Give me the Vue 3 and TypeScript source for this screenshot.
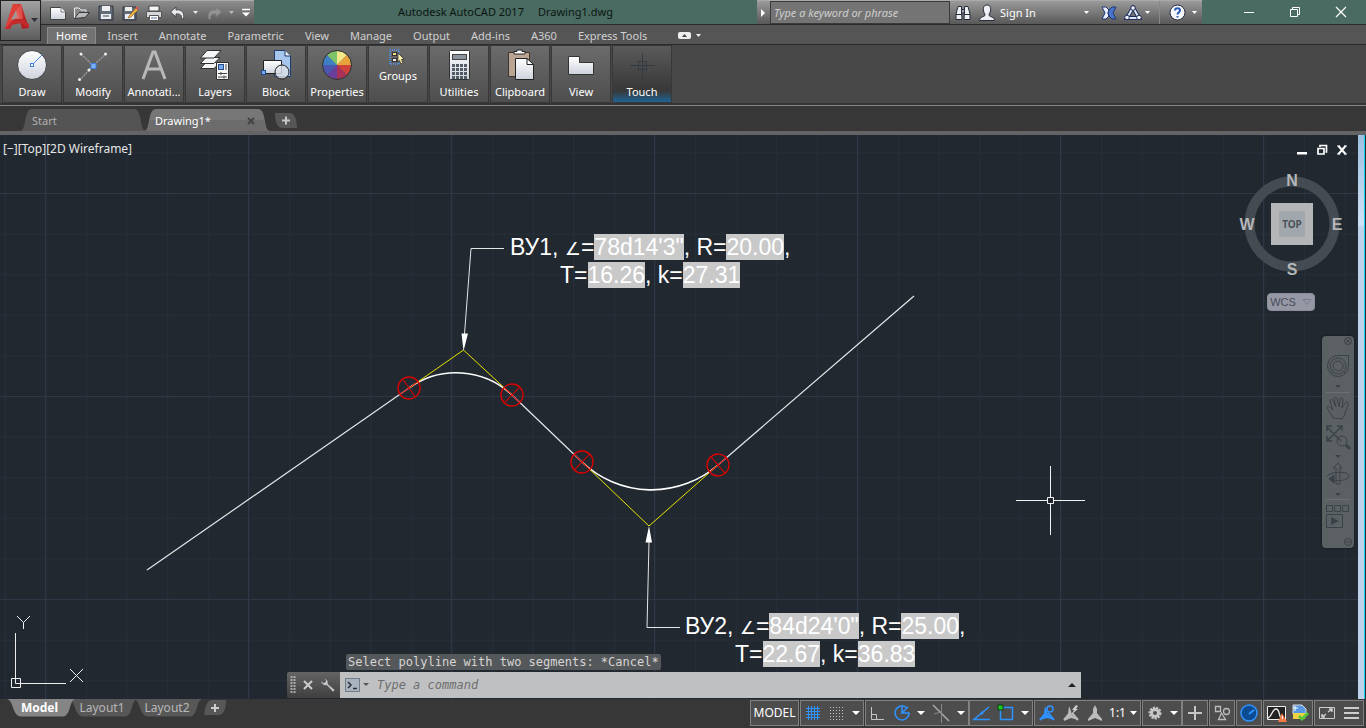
<script setup lang="ts">
import { ref } from 'vue'

const menus = ['Home', 'Insert', 'Annotate', 'Parametric', 'View', 'Manage', 'Output', 'Add-ins', 'A360', 'Express Tools']
const activeMenu = ref('Home')
const keyword = ref('')
const command = ref('')
const layouts = ['Model', 'Layout1', 'Layout2']
const activeLayout = ref('Model')

const wheelColours = ['#f3e58a', '#e8a33c', '#d0413a', '#a8325a', '#6a3f9c', '#4a58b0', '#3f7fc4', '#7cc36a']
const wheel = wheelColours.map((fill, i) => {
  const n = wheelColours.length
  const a = (i / n) * Math.PI * 2 - Math.PI / 2
  const b = ((i + 1) / n) * Math.PI * 2 - Math.PI / 2
  const p = (t: number) => `${(16 + 14 * Math.cos(t)).toFixed(2)} ${(16 + 14 * Math.sin(t)).toFixed(2)}`
  return { fill, d: `M16 16L${p(a)}A14 14 0 0 1 ${p(b)}Z` }
})

const markers = [
  { x: 409, y: 253, turn: -35 },
  { x: 512, y: 260, turn: 44 },
  { x: 582, y: 327, turn: 44 },
  { x: 718, y: 330, turn: -41 },
]
</script>

<template>
  <div class="app">
    <svg class="defs" width="0" height="0" aria-hidden="true">
      <defs>
        <linearGradient id="paper" x1="0" y1="0" x2="0" y2="1"><stop offset="0" stop-color="#fff" /><stop offset="1" stop-color="#cdd2dc" /></linearGradient>
        <linearGradient id="logoRed" x1="0" y1="0" x2="1" y2="1"><stop offset="0" stop-color="#e8443c" /><stop offset="1" stop-color="#a51a20" /></linearGradient>
        <pattern id="minor" x="45.4" y="17.4" width="40.6" height="40.6" patternUnits="userSpaceOnUse"><path d="M.5 0V40.6M0 .5H40.6" stroke="#262e3a" fill="none" /></pattern>
        <pattern id="major" x="45" y="58" width="203" height="203" patternUnits="userSpaceOnUse"><path d="M.5 0V203M0 .5H203" stroke="#303848" fill="none" /></pattern>
      </defs>
    </svg>

    <header class="head">
      <button class="logo" aria-label="Application menu">
        <svg width="39" height="39" viewBox="0 0 39 39">
          <path d="M4 28L12 3H20L28 27L21 28L19 21L10 23L9 28Z" fill="url(#logoRed)" />
          <path d="M12 3L4 28H9L15 9L18 18L20 16L16 3Z" fill="#e0403a" />
          <path d="M4 28L11 20L20 18L28 23V27L20 22L11 24L9 28Z" fill="#c22a2c" />
          <path d="M10 19L15 9L18 17Z" fill="#9a9a9a" /><path d="M14 18L16 8L20 3L22 18Z" fill="#ee6a62" opacity=".55" />
          <path d="M30 17h7l-3.500 4z" fill="#2c323a" />
        </svg>
      </button>
      <div class="head-main">
        <div class="titlebar">
          <div class="quick">
            <button aria-label="New"><svg width="18" height="18" viewBox="0 0 18 18"><path d="M1.500 3.500H12L16.500 8V15.500H1.500Z" fill="url(#paper)" stroke="#444" /><path d="M12 3.500V8H16.500" fill="#fff" stroke="#777" /></svg></button>
            <button aria-label="Open"><svg width="18" height="18" viewBox="0 0 18 18"><path d="M1.500 14V4H6L8 6H13V8" fill="#888" stroke="#eee" /><path d="M1.500 14.500L6 8.500H16.500L12 13.500Z" fill="#bbb" stroke="#303840" /></svg></button>
            <button aria-label="Save"><svg width="18" height="18" viewBox="0 0 18 18"><path d="M2 2H16V16H2Z" fill="#626b78" stroke="#303740" /><path d="M5 2H13V7H5Z" fill="#eee" /><path d="M4 10H14V15H4Z" fill="#e9edf4" /><path d="M6 12H12" stroke="#444" /></svg></button>
            <button aria-label="Save As"><svg width="18" height="18" viewBox="0 0 18 18"><path d="M2 3H15V16H2Z" fill="#626b78" stroke="#303740" /><path d="M4 3H11V7H4Z" fill="#eee" /><path d="M4 10H13V15H4Z" fill="#e9edf4" /><path d="M8 12L15 4L17 6L10 13L7 14Z" fill="#f2b544" stroke="#80551a" stroke-width=".6" /><path d="M15 3L17 5" stroke="#d55" stroke-width="2" /></svg></button>
            <button aria-label="Plot"><svg width="18" height="18" viewBox="0 0 18 18"><path d="M4 2H14V7H4Z" fill="#f4f4f4" stroke="#444" /><path d="M1.500 7.500H16.500V13.500H1.500Z" fill="#d4d7dc" stroke="#555" /><path d="M4.500 11.500H13.500V16.500H4.500Z" fill="#fff" stroke="#555" /><path d="M6 14H12" stroke="#57a" /></svg></button>
            <button aria-label="Undo"><svg width="18" height="18" viewBox="0 0 18 18"><path d="M1.500 8L7 3V6C12 5 16 8 14.500 15H12.500C13 11 11 9.500 7 10V13Z" fill="#e6e8ec" stroke="#4b4b4b" /></svg></button>
            <button class="slim" aria-label="Undo list"><svg width="6" height="4" viewBox="0 0 6 4"><path d="M0 0H5L2.500 3Z" fill="#eee" /></svg></button>
            <button class="redo" aria-label="Redo"><svg width="18" height="18" viewBox="0 0 18 18"><path d="M16.500 8L11 3V6C6 5 2 8 3.500 15H5.500C5 11 7 9.500 11 10V13Z" fill="#939393" stroke="#7c7c7c" /></svg></button>
            <button class="slim" aria-label="Redo list"><svg width="6" height="4" viewBox="0 0 6 4"><path d="M0 0H5L2.500 3Z" fill="#bbb" /></svg></button>
            <button class="custom" aria-label="Customize"><svg width="10" height="10" viewBox="0 0 10 10"><path d="M1 1.500H9" stroke="#fff" stroke-width="1.500" /><path d="M1 4.500H9L5 8.500Z" fill="#fff" /></svg></button>
          </div>
          <h1 class="doc-title"><span>Autodesk AutoCAD 2017</span><span>Drawing1.dwg</span></h1>
          <div class="info">
            <button class="info-toggle" aria-label="Collapse search"><svg width="5" height="8" viewBox="0 0 5 8"><path d="M0 0L4 4L0 8Z" fill="#fff" /></svg></button>
            <input v-model="keyword" type="text" placeholder="Type a keyword or phrase" aria-label="Type a keyword or phrase" />
            <button class="w26" aria-label="Search"><svg width="16" height="16" viewBox="0 0 16 16"><path d="M3 1.500H6.500V6L7 14.500H1V9ZM13 1.500H9.500V6L9 14.500H15V9Z" fill="#eef0f5" stroke="#252b3a" /><path d="M6.500 4.500H9.500V8H6.500Z" fill="#9aa3b5" stroke="#252b3a" /><path d="M1 9.500H7M9 9.500H15" stroke="#252b3a" /></svg></button>
            <button class="signin"><svg width="18" height="18" viewBox="0 0 18 18"><path d="M9 1C5.500 1 5 4 5.500 7C6 9 7 9.500 7 11C7 13 1.500 12.500 1.500 16.500H16.500C16.500 12.500 11 13 11 11C11 9.500 12 9 12.500 7C13 4 12.500 1 9 1Z" fill="#eef0f5" stroke="#252b3a" /></svg><span>Sign In</span><svg class="end" width="6" height="4" viewBox="0 0 6 4"><path d="M0 0H5L2.500 3Z" fill="#fff" /></svg></button>
            <button class="w26" aria-label="Exchange Apps"><svg width="16" height="14" viewBox="0 0 16 14"><path d="M1 1H5L8 4L7 7L8 10L5 13H1L4 7Z" fill="#e9eefa" stroke="#1d3775" /><path d="M15 1H11L8 4L7 7L8 10L11 13H15L12 7Z" fill="#4a74cc" stroke="#1d3775" /></svg></button>
            <button class="a360" aria-label="Stay connected"><svg width="18" height="16" viewBox="0 0 18 16"><path d="M9 2.500L3 13H15Z" fill="none" stroke="#1d2c58" stroke-width="4" /><path d="M9 2.500L3 13H15Z" fill="none" stroke="#dfe6f6" stroke-width="2" /><g fill="#f2f4fa" stroke="#1d2c58"><circle cx="9" cy="3" r="2.300" /><circle cx="3" cy="12.500" r="2.300" /><circle cx="15" cy="12.500" r="2.300" /></g></svg><svg width="6" height="4" viewBox="0 0 6 4"><path d="M0 0H5L2.500 3Z" fill="#fff" /></svg></button>
            <button class="help" aria-label="Help"><svg width="17" height="17" viewBox="0 0 17 17"><circle cx="8.500" cy="8.500" r="7.500" fill="#f6f7fa" stroke="#232a38" /><path d="M6 6.500C6 3.500 11 3.500 11 6.500C11 8.300 8.500 8.500 8.500 10.500M8.500 12V13.500" fill="none" stroke="#2a58b8" stroke-width="2" /></svg><svg width="6" height="4" viewBox="0 0 6 4"><path d="M0 0H5L2.500 3Z" fill="#fff" /></svg></button>
          </div>
          <div class="window-buttons">
            <button aria-label="Minimize"><svg width="12" height="12" viewBox="0 0 12 12"><path d="M1 6.500H11" stroke="#fff" /></svg></button>
            <button aria-label="Restore"><svg width="12" height="12" viewBox="0 0 12 12"><path d="M1.500 3.500H8.500V10.500H1.500ZM3.500 3.500V1.500H10.500V8.500H8.500" fill="none" stroke="#fff" /></svg></button>
            <button aria-label="Close"><svg width="12" height="12" viewBox="0 0 12 12"><path d="M1 1L11 11M11 1L1 11" stroke="#fff" stroke-width="1.200" /></svg></button>
          </div>
        </div>
        <nav class="menus">
          <button v-for="m in menus" :key="m" :class="{ on: m === activeMenu }" @click="activeMenu = m">{{ m }}</button>
          <button class="ribbon-toggle" aria-label="Minimize ribbon"><svg width="24" height="8" viewBox="0 0 24 8"><rect x="0" y="0" width="13" height="7" rx="2" fill="#eee" /><path d="M4 5L6.500 2L9 5Z" fill="#444" /><path d="M18 2H23L20.500 5Z" fill="#eee" /></svg></button>
        </nav>
      </div>
    </header>

    <section class="ribbon" aria-label="Ribbon">
      <button class="panel"><svg width="32" height="32" viewBox="0 0 32 32"><circle cx="16" cy="16" r="14.500" fill="url(#paper)" stroke="#3c4047" /><path d="M16 16L26 6" stroke="#4f8fe8" /><rect x="14.500" y="14.500" width="3" height="3" fill="#fff" stroke="#3d7fe0" /></svg><span>Draw</span></button>
      <button class="panel"><svg width="32" height="32" viewBox="0 0 32 32"><path d="M4 5L16 16.500L29 5M16 16.500L3 31" fill="none" stroke="#999" stroke-width="1.500" stroke-dasharray="2 1" /><g fill="#eee"><circle cx="4" cy="5" r="1.500" /><circle cx="28.500" cy="5" r="1.500" /><circle cx="2.500" cy="30.500" r="1.500" /><circle cx="12" cy="21" r="1.500" /></g><rect x="14" y="14.500" width="5" height="5" fill="#7fb0f5" stroke="#3f7fe0" /></svg><span>Modify</span></button>
      <button class="panel"><svg width="32" height="32" viewBox="0 0 32 32"><path d="M5 30L15 3H17L27 30M9 20H23" fill="none" stroke="#b9b9b9" stroke-width="3" /></svg><span>Annotati...</span></button>
      <button class="panel"><svg width="32" height="32" viewBox="0 0 32 32"><g fill="#f4f5f7" stroke="#303030"><path d="M1.500 19.500L7 13.500H21L15 19.500Z" /><path d="M1.500 14.500L7 8.500H21L15 14.500Z" /><path d="M1.500 9L8 1.500H22L15 9Z" /><path d="M17.500 13.500H29.500V30.500H17.500Z" /></g><rect x="19.500" y="15.500" width="5" height="5" fill="#76a8ee" stroke="#294c8c" /><path d="M27 15V21M19 24.500H28M19 28H28M22 23V26M25 26.500V29.500" stroke="#444" /></svg><span>Layers</span></button>
      <button class="panel"><svg width="32" height="32" viewBox="0 0 32 32"><path d="M14.500 1.500H25L30.500 7V27.500H14.500Z" fill="#a7c6ee" stroke="#1f3d68" /><path d="M25 1.500V7H30.500" fill="#e8f1fc" stroke="#1f3d68" /><path d="M3.500 11.500H21.500V24.500H3.500Z" fill="url(#paper)" stroke="#222" /><circle cx="22" cy="23" r="7" fill="#dce1e9" fill-opacity=".8" stroke="#222" /><rect x="1.500" y="21.500" width="4" height="4" fill="#78aaf0" stroke="#1d4b91" /></svg><span>Block</span></button>
      <button class="panel"><svg width="32" height="32" viewBox="0 0 32 32"><path v-for="w in wheel" :key="w.fill" :d="w.d" :fill="w.fill" /><circle cx="16" cy="16" r="14.500" fill="none" stroke="#333" /></svg><span>Properties</span></button>
      <button class="panel small"><svg width="18" height="16" viewBox="0 0 18 16"><rect x="1" y="1" width="9" height="14" fill="none" stroke="#4d9bff" stroke-width="1.500" stroke-dasharray="1 1" /><rect x="3.500" y="3.500" width="4" height="3" fill="#f5e083" stroke="#333" /><rect x="3.500" y="9.500" width="4" height="3" fill="#eee" stroke="#333" /><path d="M9 4L15 10L12.500 10.500L14 14L12 15L10.500 11.500L9 13Z" fill="#f7efaa" stroke="#222" stroke-width=".7" /></svg><span>Groups</span></button>
      <button class="panel"><svg width="32" height="32" viewBox="0 0 32 32"><rect x="6.500" y="1.500" width="20" height="29" rx="1" fill="url(#paper)" stroke="#333" /><rect x="9.500" y="5.500" width="14" height="5" fill="#8a929d" stroke="#444" /><g fill="#555b65"><template v-for="r in 4" :key="r"><rect v-for="c in 4" :key="c" :x="5 + c * 4" :y="11 + r * 4" width="3" height="3" /></template></g></svg><span>Utilities</span></button>
      <button class="panel"><svg width="32" height="32" viewBox="0 0 32 32"><path d="M4.500 3.500H25.500V27.500H4.500Z" fill="#b9a592" stroke="#3a332e" /><path d="M10 5V2.500H13V1H18V2.500H21V5Z" fill="#fff" stroke="#222" /><path d="M11.500 9.500H23L29.500 16V30.500H11.500Z" fill="url(#paper)" stroke="#222" /><path d="M23 9.500V15.500H29.500Z" fill="#fff" stroke="#222" /></svg><span>Clipboard</span></button>
      <button class="panel"><svg width="32" height="32" viewBox="0 0 32 32"><path d="M3.500 7.500H14.500V13.500H28.500V25.500H3.500Z" fill="url(#paper)" stroke="#333" /></svg><span>View</span></button>
      <button class="panel touch"><svg width="32" height="32" viewBox="0 0 32 32"><path d="M16.500 4V30M4 16.500H29" stroke="#333b43" /><rect x="12.500" y="12.500" width="8" height="8" fill="none" stroke="#333b43" /></svg><span>Touch</span></button>
    </section>

    <nav class="files">
      <button class="file">
        <svg width="126" height="22" viewBox="0 0 126 22"><path d="M0 22C7 22 3 0 12 0H114C123 0 119 22 126 22Z" fill="#545454" /></svg><span>Start</span>
      </button>
      <button class="file current">
        <svg width="126" height="22" viewBox="0 0 126 22"><path d="M0 22C7 22 3 0 12 0H114C123 0 119 22 126 22Z" fill="#777" /><path d="M0 22C6 22 5 11 6 11H120C121 11 120 22 126 22Z" fill="#6c6c6c" /></svg><span>Drawing1*</span><svg class="file-close" width="8" height="8" viewBox="0 0 8 8"><path d="M1 1L7 7M7 1L1 7" stroke="#444" stroke-width="2" /></svg>
      </button>
      <button class="file-add" aria-label="New drawing"><svg width="24" height="16" viewBox="0 0 24 16"><path d="M1 0H16C23 0 23 15 23 15H8C2 15 1 5 1 0Z" fill="#575757" /><path d="M8 7.500H16M12 3.500V11.500" stroke="#c8c8c8" stroke-width="2" /></svg></button>
    </nav>

    <main class="canvas">
      <svg class="drawing" width="100%" height="100%" aria-label="Drawing area">
        <rect width="100%" height="100%" fill="#212830" />
        <rect width="100%" height="100%" fill="url(#minor)" />
        <rect width="100%" height="100%" fill="url(#major)" />
        <g fill="none" stroke="#e4e6e8">
          <path d="M147 435L409 253M512 260L582 327M718 330L914 161" stroke-width="1.200" />
          <path d="M409 253A81 81 0 0 1 512 260M582 327A101 101 0 0 0 718 330" stroke="#fff" stroke-width="1.600" />
          <path d="M504 113.500H471L464.500 199M680 492.500H647L649 407" />
        </g>
        <path d="M409 253L463.500 215L512 260M582 327L649 391L718 330" fill="none" stroke="#e6e600" />
        <path d="M461.500 198.500H468L463.500 216ZM645.500 407.500H652L649 391Z" fill="#fff" />
        <g v-for="m in markers" :key="m.x" :transform="`translate(${m.x} ${m.y}) rotate(${m.turn})`" fill="none" stroke="#e00000">
          <circle cx="0" cy="0" r="11" stroke-width="1.300" /><path d="M0 -11V11M-11 0H11" />
        </g>
        <path d="M1016 365.500H1047M1054 365.500H1085M1050.500 331V362M1050.500 369V400M1047.500 362.500H1053.500V368.500H1047.500Z" fill="none" stroke="#f2f2f2" />
        <path d="M15.500 498V548.500H66M11.500 543.500H20.500V552.500H11.500ZM70 534L83 547M83 534L70 547M17 481L23.500 487.500L30 481M23.500 487.500V494" fill="none" stroke="#eee" />
      </svg>

      <p class="note first">ВУ1, <b>∠</b>=<mark>78d14'3"</mark>, R=<mark>20.00</mark>,<br />T=<mark>16.26</mark>, k=<mark>27.31</mark></p>
      <p class="note second">ВУ2, <b>∠</b>=<mark>84d24'0"</mark>, R=<mark>25.00</mark>,<br />T=<mark>22.67</mark>, k=<mark>36.83</mark></p>

      <p class="viewport-label">[−][Top][2D Wireframe]</p>

      <div class="overlay">
        <div class="view-buttons">
          <button aria-label="Minimize view"><svg width="12" height="12" viewBox="0 0 12 12"><path d="M1 8H11V10.500H1Z" fill="#fff" /></svg></button>
          <button aria-label="Restore view"><svg width="12" height="12" viewBox="0 0 12 12"><path d="M2 4.500H8V10H2ZM4 3V1.500H10.500V8H9.500" fill="none" stroke="#fff" stroke-width="1.700" /></svg></button>
          <button aria-label="Close view"><svg width="12" height="12" viewBox="0 0 12 12"><path d="M2.500 2L9.500 10M9.500 2L2.500 10" stroke="#fff" stroke-width="2" /><path d="M1 2H4M8 2H11M1 10H4M8 10H11" stroke="#fff" stroke-width="1.200" /></svg></button>
        </div>
        <svg class="cube" width="110" height="110" viewBox="0 0 110 110" aria-label="ViewCube">
          <circle cx="55" cy="55" r="42.500" fill="none" stroke="#444b52" stroke-width="10" />
          <g class="compass"><text x="55" y="17">N</text><text x="100" y="61">E</text><text x="55" y="106">S</text><text x="10" y="61">W</text></g>
          <rect x="34" y="34" width="42" height="42" fill="#b3b5b6" /><rect x="42" y="42" width="26" height="26" fill="#a1a8ad" />
          <text class="face" x="55" y="59">TOP</text>
        </svg>
        <button class="wcs">WCS<svg width="10" height="8" viewBox="0 0 10 8"><path d="M1 1.500H9L5 6.500Z" fill="none" stroke="#777c88" /></svg></button>
        <div class="navbar" role="toolbar" aria-label="Navigation bar">
          <svg width="32" height="212" viewBox="0 0 32 212">
            <g fill="none" stroke="#3b4148">
              <circle cx="26" cy="5" r="3.500" /><path d="M24.500 3.500L27.500 6.500M27.500 3.500L24.500 6.500" />
              <path d="M16 19.500H26.500V30A10.500 10.500 0 1 1 16 19.500Z" /><circle cx="16" cy="30" r="8" /><circle cx="16" cy="30" r="5" /><path d="M12 34L9 37M20 34L23 37" />
              <path d="M4 56.500H28M4 163.500H28" stroke="#6a7073" />
              <path d="M11 82C9 77 5 73 5 71C6 69 8 71 11 74L8 65C8 63 10 63 11 65L14 71L12 63C13 61 15 61 15 63L17 71L18 63C19 61 21 62 21 64L20 72L24 66C26 65 27 67 26 69L22 80L20 83Z" />
              <path d="M5 91L19 105M19 91L5 105M5 95V90H10M15 90H20V95M5 100V105H10" stroke-width="1.500" /><circle cx="20" cy="105" r="5" /><path d="M24 109L28 113" stroke-width="3" />
              <path d="M14 148V132H11L16 127L20 132H18V148ZM5 141C5 136 27 134 27 140C27 145 13 146 9 143" /><path d="M12 139L7 143L12 147Z" fill="#3b4148" />
              <path d="M4.500 169.500H10.500V175.500H4.500ZM12.500 169.500H18.500V175.500H12.500ZM20.500 169.500H26.500V175.500H20.500ZM4.500 178.500H20.500V191.500H4.500Z" />
              <circle cx="26" cy="206" r="3.500" /><path d="M24 206H28" />
            </g>
            <path d="M13 49H19L16 52ZM13 119H19L16 122ZM13 157H19L16 160ZM9 181V189L17 185Z" fill="#3b4148" />
          </svg>
        </div>
      </div>

      <div class="command">
        <output class="history">Select polyline with two segments: *Cancel*</output>
        <div class="command-line">
          <div class="command-tools">
            <svg width="6" height="18" viewBox="0 0 6 18"><path d="M1.500 0V18M4.500 0V18" stroke="#aaa" stroke-width="2" stroke-dasharray="2 1" /></svg>
            <button aria-label="Close command line"><svg width="10" height="10" viewBox="0 0 10 10"><path d="M1 1L9 9M9 1L1 9" stroke="#ccc" stroke-width="2" /></svg></button>
            <button aria-label="Customize command line"><svg width="16" height="16" viewBox="0 0 16 16"><path d="M5 1L8 4V7L15 13L13 15L7 8.500H4L1 5.500V4L4 6L6 4L4 1Z" fill="#c4c6ca" stroke="#4a4a4a" stroke-width=".6" /></svg></button>
          </div>
          <label class="command-input">
            <svg width="26" height="14" viewBox="0 0 26 14"><rect x=".5" y=".5" width="14" height="13" fill="#a9b3c0" stroke="#727c88" /><path d="M3 4L6 7L3 10M8 10.500H12" fill="none" stroke="#2b3038" stroke-width="1.500" /><path d="M18 5H24L21 8Z" fill="#555" /></svg>
            <input v-model="command" type="text" placeholder="Type a command" aria-label="Type a command" />
            <svg width="10" height="6" viewBox="0 0 10 6"><path d="M1 5H9L5 1Z" fill="#222" /></svg>
          </label>
        </div>
      </div>
    </main>

    <footer class="bottom">
      <nav class="layouts">
        <button v-for="l in layouts" :key="l" :class="{ on: l === activeLayout }" @click="activeLayout = l">
          <svg width="68" height="18" viewBox="0 0 68 18"><path d="M0 0H68C62 2 64 17 56 17.500H14C5 17 7 2 0 0Z" :fill="l === activeLayout ? '#858585' : '#575757'" /></svg><span>{{ l }}</span>
        </button>
        <button class="add" aria-label="New layout"><svg width="24" height="16" viewBox="0 0 24 16"><path d="M9 0H23C23 10 20 15 16 15H1C2 7 4 0 9 0Z" fill="#575757" /><path d="M8 8H16M12 4V12" stroke="#ccc" stroke-width="2" /></svg></button>
      </nav>
      <div class="status" role="toolbar" aria-label="Status bar">
        <div class="cell"><button class="model">MODEL</button></div>
        <div class="cell">
          <button aria-label="Grid"><svg viewBox="0 0 24 24"><path d="M7.500 5V19M10.500 5V19M13.500 5V19M16.500 5V19M5 7.500H19M5 10.500H19M5 13.500H19M5 16.500H19" stroke="#2f93ff" /></svg></button>
          <button aria-label="Snap"><svg viewBox="0 0 24 24"><path d="M5 6.500H19M5 9.500H19M5 12.500H19M5 15.500H19M5 18.500H19" stroke="#c4c4c4" stroke-dasharray="1 2" /></svg></button>
          <button class="drop" aria-label="Snap options"></button>
        </div>
        <div class="cell">
          <button aria-label="Ortho"><svg viewBox="0 0 24 24"><path d="M5.500 6V18.500H18M5.500 13.500H10.500V18.500" fill="none" stroke="#c4c4c4" /></svg></button>
          <button aria-label="Polar tracking"><svg viewBox="0 0 24 24"><path d="M17 7A7 7 0 1 0 19 12H12L18 6M12 6V12" fill="none" stroke="#2f93ff" stroke-width="1.500" /></svg></button>
          <button class="drop" aria-label="Polar options"></button>
          <button class="wide" aria-label="Isometric"><svg viewBox="0 0 24 24"><path d="M4 4L20 20" stroke="#aaa" stroke-width="1.500" /><path d="M12.500 3V22M5 13L12 11" stroke="#888" /></svg></button>
          <button class="drop" aria-label="Isometric options"></button>
        </div>
        <div class="cell joined">
          <button aria-label="Object snap tracking"><svg viewBox="0 0 24 24"><path d="M19 6L4 18.500H20" fill="none" stroke="#2f93ff" stroke-width="1.500" /><circle cx="12" cy="12" r="1.500" fill="#2f93ff" /></svg></button>
          <button aria-label="Object snap"><svg viewBox="0 0 24 24"><path d="M6.500 6.500H18.500V18.500H6.500Z" fill="none" stroke="#2f93ff" stroke-width="1.500" /><rect x="4" y="4" width="5" height="5" fill="#1ec81e" stroke="#123d12" /></svg></button>
          <button class="drop" aria-label="Object snap options"></button>
        </div>
        <div class="cell">
          <button aria-label="Annotation visibility"><svg viewBox="0 0 24 24"><path d="M10 5L12 10L13 14L19 19L12 17L5 19L9 13Z" fill="#2f93ff" /><path d="M5 19L10 13M13 12L19 19" stroke="#2f93ff" stroke-width="2" /><circle cx="15" cy="8" r="3" fill="none" stroke="#2f93ff" stroke-width="1.500" /></svg></button>
          <button aria-label="Auto scale"><svg viewBox="0 0 24 24"><path d="M10 5L12 10L13 14L19 19L12 17L5 20L9 13Z" fill="#bbb" /><path d="M5 19L10 13M13 12L19 19" stroke="#bbb" stroke-width="2" /><path d="M17 4L13 9H15L13 13L19 8H17L19 5Z" fill="#ccc" /></svg></button>
          <button aria-label="Annotation scale"><svg viewBox="0 0 24 24"><path d="M12 4L14 8V12L19 18V20L12 17L5 20V18L10 12V8Z" fill="#bbb" /></svg></button>
          <button class="scale">1:1<svg width="8" height="5" viewBox="0 0 8 5"><path d="M0 0H7L3.500 4Z" fill="#fff" /></svg></button>
        </div>
        <div class="cell">
          <button aria-label="Workspace"><svg viewBox="0 0 24 24"><circle cx="12" cy="12" r="5" fill="none" stroke="#c6c6c6" stroke-width="3" stroke-dasharray="2 1" /><circle cx="12" cy="12" r="3.500" fill="none" stroke="#c6c6c6" stroke-width="3" /></svg></button>
          <button class="drop" aria-label="Workspace options"></button>
        </div>
        <div class="cell joined"><button aria-label="Annotation monitor"><svg viewBox="0 0 24 24"><path d="M5 12H19M12 5V19" stroke="#c6c6c6" stroke-width="2" /></svg></button></div>
        <div class="cell"><button aria-label="Isolate objects"><svg viewBox="0 0 24 24"><path d="M5.500 5.500H10.500V10.500H5.500ZM11.500 12L15.500 18.500H8.500Z" fill="none" stroke="#bbb" stroke-width="1.300" /><circle cx="16.500" cy="10.500" r="3" fill="none" stroke="#bbb" stroke-width="1.300" /></svg></button></div>
        <div class="cell"><button aria-label="Hardware acceleration"><svg viewBox="0 0 24 24"><circle cx="12" cy="12" r="8" fill="#0c4b91" stroke="#2f93ff" stroke-width="1.500" /><path d="M12 13L17 9" stroke="#2f93ff" stroke-width="2" /></svg></button></div>
        <div class="cell">
          <button aria-label="Performance"><svg viewBox="0 0 24 24"><path d="M3.500 5.500H21.500V18.500H3.500Z" fill="#222" stroke="#eee" /><path d="M4 17C8 16 8 8 12 8S15 16 17 17" fill="none" stroke="#eee" stroke-width="1.300" /><path d="M18 12L23 21H14Z" fill="#f07a42" /><path d="M18.500 15V18" stroke="#fff" /></svg></button>
          <button aria-label="Plot status"><svg viewBox="0 0 24 24"><path d="M5 4H14L18 8V13H5Z" fill="#5798e5" stroke="#ddd" /><path d="M5 7H10M7 5V10" stroke="#fff" /><path d="M5 12H17V18H5Z" fill="#f0d245" /><path d="M11 15L14 18L20 12" fill="none" stroke="#59c53a" stroke-width="3" /></svg></button>
        </div>
        <div class="cell">
          <button aria-label="Clean screen"><svg viewBox="0 0 24 24"><path d="M4.500 6.500H19.500V17.500H4.500Z" fill="none" stroke="#ccc" /><path d="M13 11L17 8M14 8H17V11M11 13L7 16M7 13V16H10" fill="none" stroke="#ccc" stroke-width="1.500" /></svg></button>
          <button aria-label="Customization"><svg viewBox="0 0 24 24"><path d="M5 7H20M5 12H20M5 17H20" stroke="#ccc" stroke-width="2" /></svg></button>
        </div>
      </div>
    </footer>
  </div>
</template>

<style>
html, body { margin: 0; background: #383838; }
</style>

<style scoped>
.app { height: 100vh; display: flex; flex-direction: column; overflow: hidden; background: #383838; color: #e6e6e6; font: 11px/16px "Noto Sans", "Open Sans", sans-serif; }
.defs { position: absolute; }
button { display: flex; align-items: center; justify-content: center; padding: 0; border: 0; background: none; color: inherit; font: inherit; white-space: nowrap; }
svg { display: block; flex: none; }
p, h1 { margin: 0; }

.head { display: flex; height: 44px; background: #555; flex: none; }
.logo { width: 41px; height: 41px; border: 1px solid #222; background: linear-gradient(#a2a2a2, #5c5c5c); flex: none; }
.head-main { flex: 1; min-width: 0; }
.titlebar { height: 25px; display: flex; background: #496b61; border-bottom: 1px solid #2b2b2b; box-sizing: border-box; }
.quick { display: flex; width: 213px; padding-left: 5px; box-sizing: border-box; background: linear-gradient(#8d8d8d, #585858); border-top: 1px solid #aaa; }
.quick button { width: 24px; }
.quick .slim { width: 12px; }
.quick .redo { width: 24px; }
.quick .custom { width: 16px; }
.doc-title { flex: 1; display: flex; justify-content: center; gap: 14px; font-size: 11px; font-weight: 400; line-height: 24px; color: #0c1512; white-space: nowrap; }
.info { display: flex; align-items: stretch; width: 445px; background: linear-gradient(#9a9a9a, #585858); border-top: 1px solid #aaa; box-sizing: border-box; }
.info-toggle { width: 13px; }
.info input { width: 180px; box-sizing: border-box; border: 1px solid #3a3a3a; background: #747474; color: #eee; font: italic 11px/16px "Noto Sans", sans-serif; padding: 0 3px; outline: none; }
.info input::placeholder { color: #cfcfcf; opacity: 1; }
.w26 { width: 26px; }
.signin { width: 120px; gap: 4px; justify-content: flex-start; padding-left: 2px; color: #fff; }
.end { margin-left: auto; margin-right: 6px; }
.a360 { width: 38px; gap: 3px; justify-content: flex-start; padding-left: 2px; border-right: 1px solid #888; box-sizing: border-box; }
.help { flex: 1; gap: 6px; justify-content: flex-start; padding-left: 9px; }
.window-buttons { display: flex; width: 164px; padding-left: 24px; box-sizing: border-box; }
.window-buttons button { width: 46px; }

.menus { display: flex; gap: 1px; height: 19px; align-items: flex-end; padding-left: 6px; }
.menus button { height: 17px; padding: 0 10px; color: #d0d0d0; }
.menus .on { padding: 0 8px; border: 1px solid #8b8b8b; border-bottom: 0; background: #727272; color: #fff; }
.menus .ribbon-toggle { padding-left: 20px; }

.ribbon { display: flex; gap: 3px; height: 62px; box-sizing: border-box; padding: 1px 3px 3px; border-top: 1px solid #2b2b2b; border-bottom: 1px solid #858585; background: #484848; box-shadow: inset 0 -2px #343434; flex: none; }
.panel { width: 58px; flex-direction: column; justify-content: flex-start; padding-top: 3px; gap: 3px; box-sizing: border-box; background: linear-gradient(#6b6b6b, #4e4e4e); color: #fff; outline: 1px solid #383838; overflow: hidden; }
.small { padding-top: 3px; }
.touch { background: linear-gradient(#5a5a5a, #383838 80%, #1f6396); }

.files { display: flex; height: 29px; box-sizing: border-box; padding: 3px 0 0 20px; border-bottom: 4px solid #646464; background: #373737; flex: none; }
.file { position: relative; width: 124px; height: 22px; justify-content: flex-start; padding: 2px 0 0 12px; color: #b0b0b0; box-sizing: border-box; }
.file > svg { position: absolute; left: 0; top: 0; }
.file span { position: relative; }
.file > .file-close { position: relative; margin-left: auto; margin-right: 13px; }
.current { padding-left: 11px; color: #fff; }
.file-add { width: 24px; height: 22px; margin-left: 6px; padding-top: 2px; }

.canvas { position: relative; flex: 1; min-height: 0; overflow: hidden; box-sizing: border-box; border-right: 1px solid #2b2b2b; }
.canvas::after { content: ""; position: absolute; right: 0; top: 0; bottom: 0; width: 6px; border-right: 1px solid #1fd0f0; background: linear-gradient(#9dc0e2, #cfe2f5 90px, #bdd3ec 92px); }
.drawing { position: absolute; left: 0; top: 0; }
.note { position: absolute; text-align: center; font: 23px/28px "Liberation Sans", Arial, sans-serif; color: #fff; white-space: nowrap; }
.first { left: 510px; top: 98px; }
.second { left: 685px; top: 477px; }
.note mark { background: #c9c9c9; color: #fff; }
.note b { font: 18px/16px "DejaVu Sans", sans-serif; }
.viewport-label { position: absolute; left: 3px; top: 6px; font-size: 12px; }

.overlay { position: absolute; right: 7px; top: 8px; display: flex; flex-direction: column; align-items: flex-end; }
.view-buttons { display: flex; gap: 8px; padding-right: 10px; height: 14px; }
.cube { margin: 12px 11px 0 0; }
.compass text { font: bold 16px "Liberation Sans", Arial, sans-serif; fill: #b4b6b8; text-anchor: middle; }
.face { font: bold 10px "Noto Sans", sans-serif; fill: #4b545c; text-anchor: middle; }
.wcs { width: 48px; height: 18px; margin: 14px 43px 0 0; gap: 6px; border: 1px solid #8a8e9b; border-radius: 4px; background: #9698a6; color: #464b57; font: 11px/14px "Liberation Sans", Arial, sans-serif; }
.navbar { width: 32px; height: 212px; margin: 25px 4px 0 0; background: #5b6062; border-radius: 4px; box-shadow: 0 0 2px #111; }

.command { position: absolute; left: 287px; right: 284px; bottom: 1px; display: flex; flex-direction: column; align-items: flex-start; gap: 2px; }
.history { display: block; margin-left: 59px; padding: 0 2px; border-radius: 2px; background: #55585a; color: #d5d5d5; font: 12px/16px "DejaVu Sans Mono", monospace; }
.command-line { display: flex; width: 100%; height: 26px; }
.command-tools { display: flex; align-items: center; gap: 7px; width: 53px; padding-left: 3px; box-sizing: border-box; background: linear-gradient(#646464, #3f3f3f); border-radius: 2px 0 0 2px; }
.command-input { flex: 1; display: flex; align-items: center; gap: 6px; padding: 0 4px 0 5px; background: #bfc0c2; }
.command-input input { flex: 1; min-width: 0; padding: 0; border: 0; outline: none; background: none; color: #222; font: 12px/16px "DejaVu Sans Mono", monospace; }
.command-input input::placeholder { color: #6e6e6e; opacity: 1; font-style: italic; }

.bottom { display: flex; justify-content: space-between; height: 29px; flex: none; background: #373737; }
.layouts { display: flex; align-items: flex-start; padding-left: 7px; font-size: 12px; }
.layouts button { position: relative; width: 66px; height: 18px; margin-right: -1px; color: #b8b8b8; }
.layouts button > svg { position: absolute; left: 0; top: 0; }
.layouts .on { width: 65px; margin-right: -3px; color: #fff; font-weight: 700; z-index: 1; }
.layouts span { position: relative; }
.layouts .add { width: 24px; margin-left: 4px; }
.layouts .add > svg { position: static; }
.status { display: flex; gap: 1px; padding: 1px 2px 2px 0; font-size: 12px; }
.cell { display: flex; border: 1px solid #808080; background: #4d4d4d; color: #fff; }
.cell.joined { margin-left: -1px; }
.cell button { width: 24px; }
.cell button > svg { width: 24px; height: 24px; fill: none; }
.cell .model { width: 47px; }
.cell .drop { width: 14px; }
.cell .wide { width: 26px; }
.drop::before { content: ""; border: 4px solid transparent; border-top-color: #fff; border-bottom: 0; }
.cell .scale { width: 33px; gap: 4px; }
.cell .scale > svg { width: 8px; height: 5px; }
</style>
